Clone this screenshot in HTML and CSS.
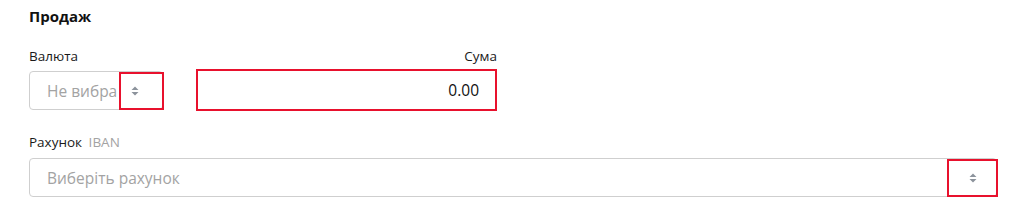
FILE: index.html
```html
<!DOCTYPE html>
<html lang="uk">
<head>
<meta charset="utf-8">
<link rel="stylesheet" href="styles.css">
</head>
<body>
<div class="page">
  <h2 class="title">Продаж</h2>
  <div class="row">
    <div class="col col-currency">
      <div class="label">Валюта</div>
      <div class="select small">
        <span class="select-text">Не вибра</span>
        <span class="arrow-box">
          <svg width="8" height="10" viewBox="0 0 8 10"><path d="M4 0.5 L7.5 4 H0.5 Z M4 9.5 L7.5 6 H0.5 Z" fill="#8c939c"/></svg>
        </span>
      </div>
    </div>
    <div class="col col-amount">
      <div class="label right">Сума</div>
      <div class="amount">0.00</div>
    </div>
  </div>
  <div class="label label-account">Рахунок <span class="muted">IBAN</span></div>
  <div class="select wide">
    <span class="select-text">Виберіть рахунок</span>
    <span class="arrow-box">
      <svg width="8" height="10" viewBox="0 0 8 10"><path d="M4 0.5 L7.5 4 H0.5 Z M4 9.5 L7.5 6 H0.5 Z" fill="#8c939c"/></svg>
    </span>
  </div>
</div>
</body>
</html>
```
FILE: styles.css
```css
* { box-sizing: border-box; }
body {
  margin: 0;
  background: #fff;
  font-family: "Open Sans", "Noto Sans", sans-serif;
  color: #1a1a1a;
}
.page {
  padding: 4px 22px 0 29px;
}
.title {
  margin: 0;
  font-size: 15px;
  font-weight: 700;
  line-height: 24px;
  color: #111;
}
.row {
  display: flex;
  gap: 33px;
  margin-top: 19px;
}
.col { display: flex; flex-direction: column; }
.col-currency { width: 134px; }
.col-amount { width: 301px; }
.label {
  font-size: 13.5px;
  line-height: 18px;
  color: #1a1a1a;
  margin-bottom: 6px;
}
.label.right { text-align: right; }
.col-amount .label { margin-bottom: 4px; }
.muted { color: #a3a3a3; margin-left: 3px; }
.select {
  display: flex;
  align-items: center;
  height: 39px;
  border: 1px solid #cfcfcf;
  border-radius: 4px;
}
.select-text {
  flex: 1;
  min-width: 0;
  white-space: nowrap;
  font-size: 15.5px;
  color: #a3a3a3;
  padding-left: 17px;
}
.arrow-box {
  flex: none;
  width: 46px;
  height: 38px;
  border: 2px solid #e8112d;
  margin-right: -2px;
  display: flex;
  align-items: center;
  justify-content: center;
}
.small .arrow-box { width: 45px; padding-right: 14px; }
.amount {
  height: 42px;
  border: 2px solid #e8112d;
  display: flex;
  align-items: center;
  justify-content: flex-end;
  padding-right: 16px;
  font-size: 15.5px;
  color: #111;
}
.label-account {
  margin-top: 22px;
  margin-bottom: 7px;
}
.wide { width: 968px; }
.wide .arrow-box { width: 51px; }
```
